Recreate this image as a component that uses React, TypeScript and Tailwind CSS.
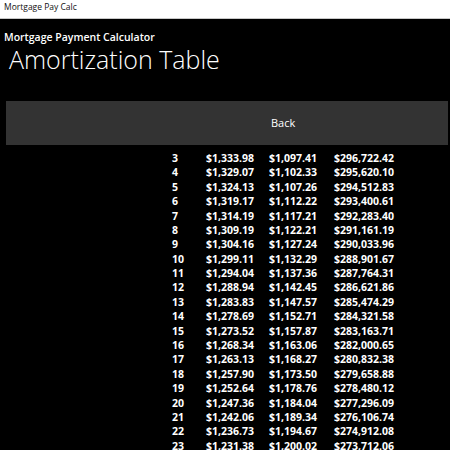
import React from "react";

const rows: [string, string, string, string][] = [
  ["3", "$1,333.98", "$1,097.41", "$296,722.42"],
  ["4", "$1,329.07", "$1,102.33", "$295,620.10"],
  ["5", "$1,324.13", "$1,107.26", "$294,512.83"],
  ["6", "$1,319.17", "$1,112.22", "$293,400.61"],
  ["7", "$1,314.19", "$1,117.21", "$292,283.40"],
  ["8", "$1,309.19", "$1,122.21", "$291,161.19"],
  ["9", "$1,304.16", "$1,127.24", "$290,033.96"],
  ["10", "$1,299.11", "$1,132.29", "$288,901.67"],
  ["11", "$1,294.04", "$1,137.36", "$287,764.31"],
  ["12", "$1,288.94", "$1,142.45", "$286,621.86"],
  ["13", "$1,283.83", "$1,147.57", "$285,474.29"],
  ["14", "$1,278.69", "$1,152.71", "$284,321.58"],
  ["15", "$1,273.52", "$1,157.87", "$283,163.71"],
  ["16", "$1,268.34", "$1,163.06", "$282,000.65"],
  ["17", "$1,263.13", "$1,168.27", "$280,832.38"],
  ["18", "$1,257.90", "$1,173.50", "$279,658.88"],
  ["19", "$1,252.64", "$1,178.76", "$278,480.12"],
  ["20", "$1,247.36", "$1,184.04", "$277,296.09"],
  ["21", "$1,242.06", "$1,189.34", "$276,106.74"],
  ["22", "$1,236.73", "$1,194.67", "$274,912.08"],
  ["23", "$1,231.38", "$1,200.02", "$273,712.06"],
];

export default function App() {
  return (
    <div
      className="w-[450px] h-[450px] overflow-hidden bg-black flex flex-col"
      style={{ fontFamily: '"Open Sans", "Noto Sans", sans-serif' }}
    >
      <div className="h-[19px] shrink-0 bg-white border-b border-[#c8c8c8] flex items-center pl-[4px] pb-[4px] text-[8.5px] text-[#111] leading-none">
        Mortgage Pay Calc
      </div>
      <div className="pl-[4px] pt-[12px] text-[10.5px] font-semibold text-white leading-[13px]">
        Mortgage Payment Calculator
      </div>
      <div className="pl-[9px] pt-[1px] text-[25px] font-light text-white leading-[29px]">
        Amortization Table
      </div>
      <div className="mt-[27px] ml-[6px] mr-[2px] h-[44px] shrink-0 bg-[#333333] flex items-center pl-[265px] text-[11px] text-white">
        Back
      </div>
      <div className="mt-[6px] flex flex-col text-[10.5px] font-bold text-white">
        {rows.map((r) => (
          <div key={r[0]} className="flex h-[14.4px] items-center leading-none">
            <div className="w-[34px] ml-[172px]">{r[0]}</div>
            <div className="w-[63px]">{r[1]}</div>
            <div className="w-[65px]">{r[2]}</div>
            <div>{r[3]}</div>
          </div>
        ))}
      </div>
    </div>
  );
}
